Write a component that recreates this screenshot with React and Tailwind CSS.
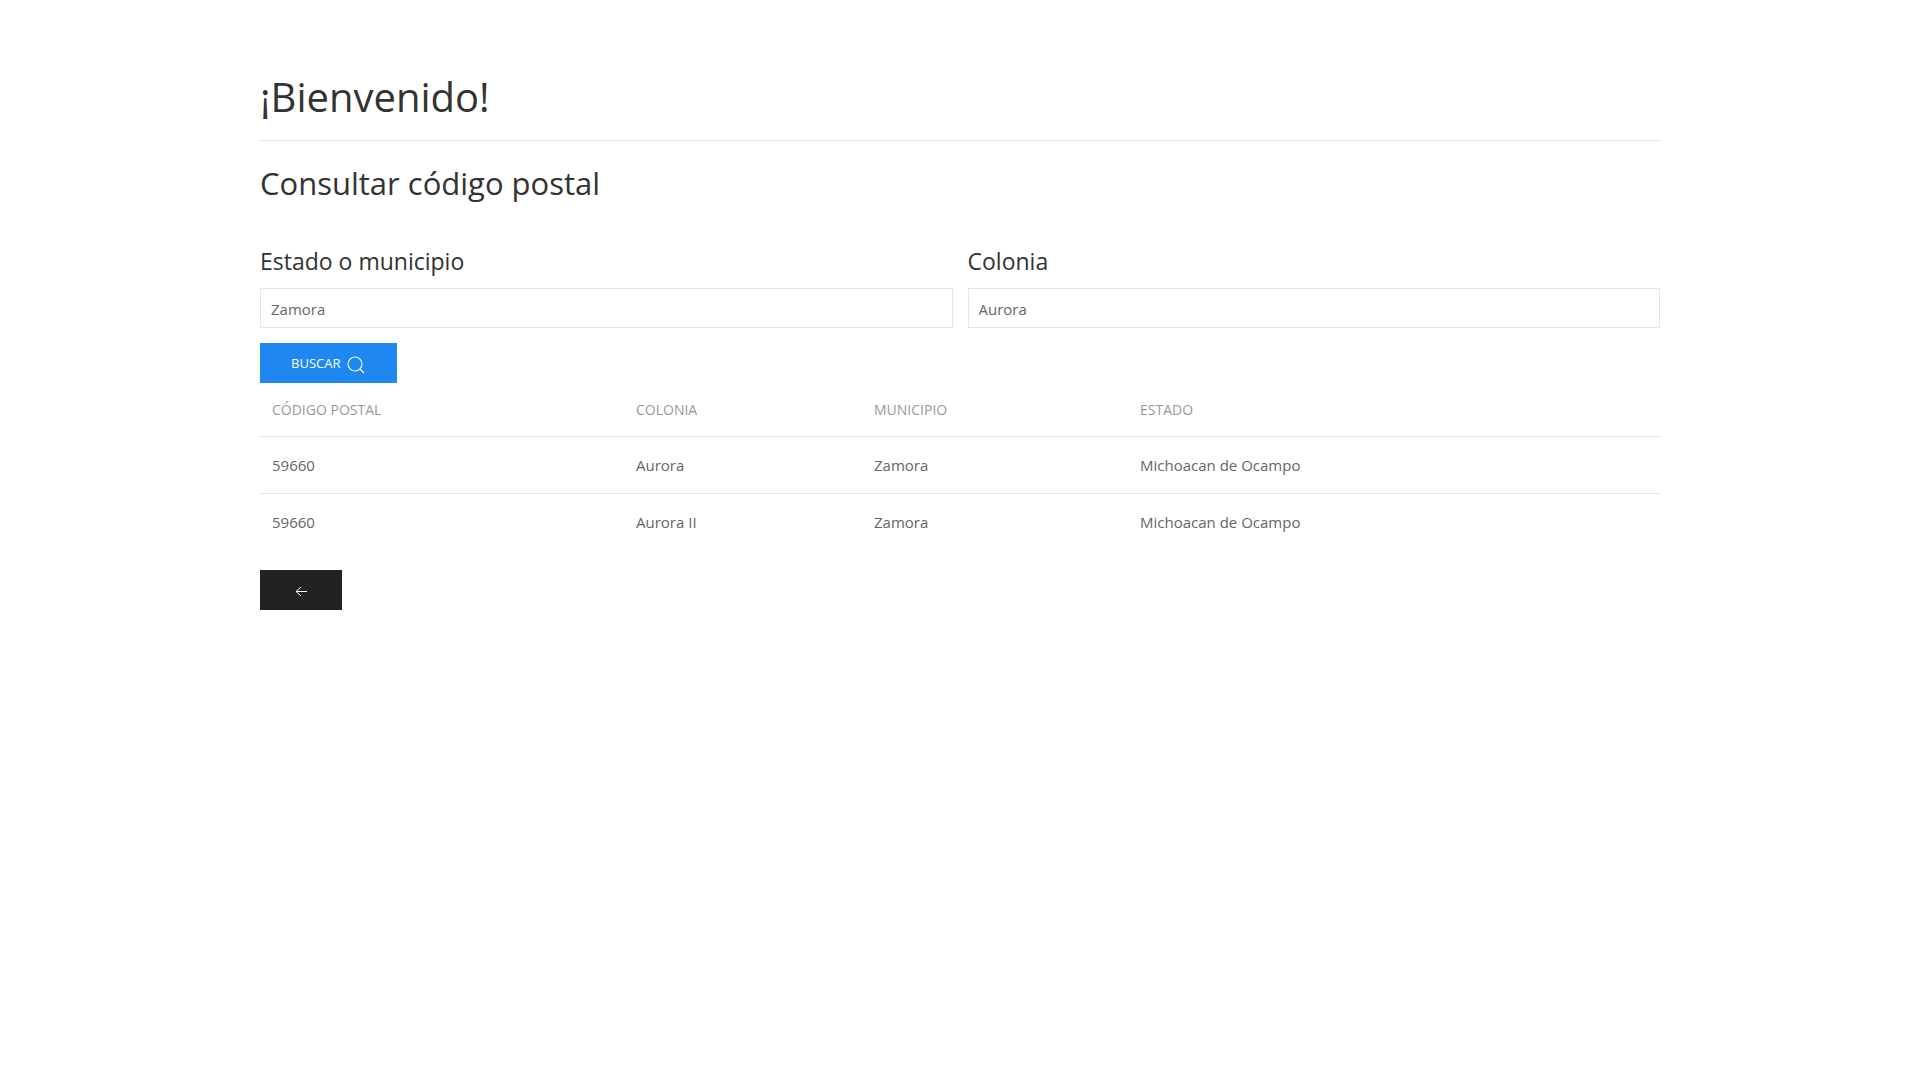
const columns = [
  { label: "Código postal", width: "w-[26%]" },
  { label: "Colonia", width: "w-[17%]" },
  { label: "Municipio", width: "w-[19%]" },
  { label: "Estado", width: "w-[38%]" },
];

const rows = [
  ["59660", "Aurora", "Zamora", "Michoacan de Ocampo"],
  ["59660", "Aurora II", "Zamora", "Michoacan de Ocampo"],
];

function SearchIcon() {
  return (
    <svg className="mt-1 size-5" viewBox="0 0 20 20" fill="none" stroke="currentColor" strokeWidth="1.1" aria-hidden="true">
      <circle cx="9" cy="9" r="7" />
      <path d="M14,14 L18,18 L14,14 Z" />
    </svg>
  );
}

function ArrowLeftIcon() {
  return (
    <svg className="mt-1 size-5" viewBox="0 0 20 20" fill="none" stroke="currentColor" aria-hidden="true">
      <polyline points="10 14 5 9.5 10 5" />
      <line x1="16" y1="9.5" x2="5" y2="9.5" />
    </svg>
  );
}

function Field({ id, label, value }) {
  return (
    <div>
      <label htmlFor={id} className="block text-[23px] leading-[34px] text-[#333]">
        {label}
      </label>
      <input
        id={id}
        type="text"
        defaultValue={value}
        className="mt-2.5 block h-10 w-full border border-[#e5e5e5] bg-white px-2.5 pt-0.5 text-[15px] text-[#666] outline-none focus:border-[#1e87f0]"
      />
    </div>
  );
}

export default function App() {
  return (
    <main className="mx-auto max-w-[1480px] px-10 pt-[74px] pb-10 font-['Open_Sans','Noto_Sans',sans-serif] text-[15px] leading-6 text-[#666]">
      <h1 className="text-[40px] leading-[46px] font-normal text-[#333]">¡Bienvenido!</h1>
      <hr className="my-5 border-[#e5e5e5]" />
      <h2 className="text-[31px] leading-[44px] font-normal text-[#333]">Consultar código postal</h2>
      <form className="mt-[39px]" onSubmit={(e) => e.preventDefault()}>
        <div className="grid grid-cols-2 gap-[15px]">
          <Field id="municipio" label="Estado o municipio" value="Zamora" />
          <Field id="colonia" label="Colonia" value="Aurora" />
        </div>
        <button type="submit" className="mt-[15px] flex h-10 items-center gap-1.5 bg-[#1e87f0] px-[31px] text-[13px] text-white uppercase">
          Buscar
          <SearchIcon />
        </button>
      </form>
      <table className="w-full table-fixed border-collapse text-left">
        <thead>
          <tr>
            {columns.map((c) => (
              <th key={c.label} scope="col" className={`${c.width} px-3 py-4 text-[14px] leading-[21px] font-normal text-[#999] uppercase`}>
                {c.label}
              </th>
            ))}
          </tr>
        </thead>
        <tbody>
          {rows.map((r) => (
            <tr key={r[1]} className="border-t border-[#e5e5e5]">
              {r.map((cell, i) => (
                <td key={i} className="px-3 py-4">
                  {cell}
                </td>
              ))}
            </tr>
          ))}
        </tbody>
      </table>
      <button type="button" aria-label="Regresar" className="mt-5 flex h-10 items-center bg-[#222] px-[31px] text-white">
        <ArrowLeftIcon />
      </button>
    </main>
  );
}
